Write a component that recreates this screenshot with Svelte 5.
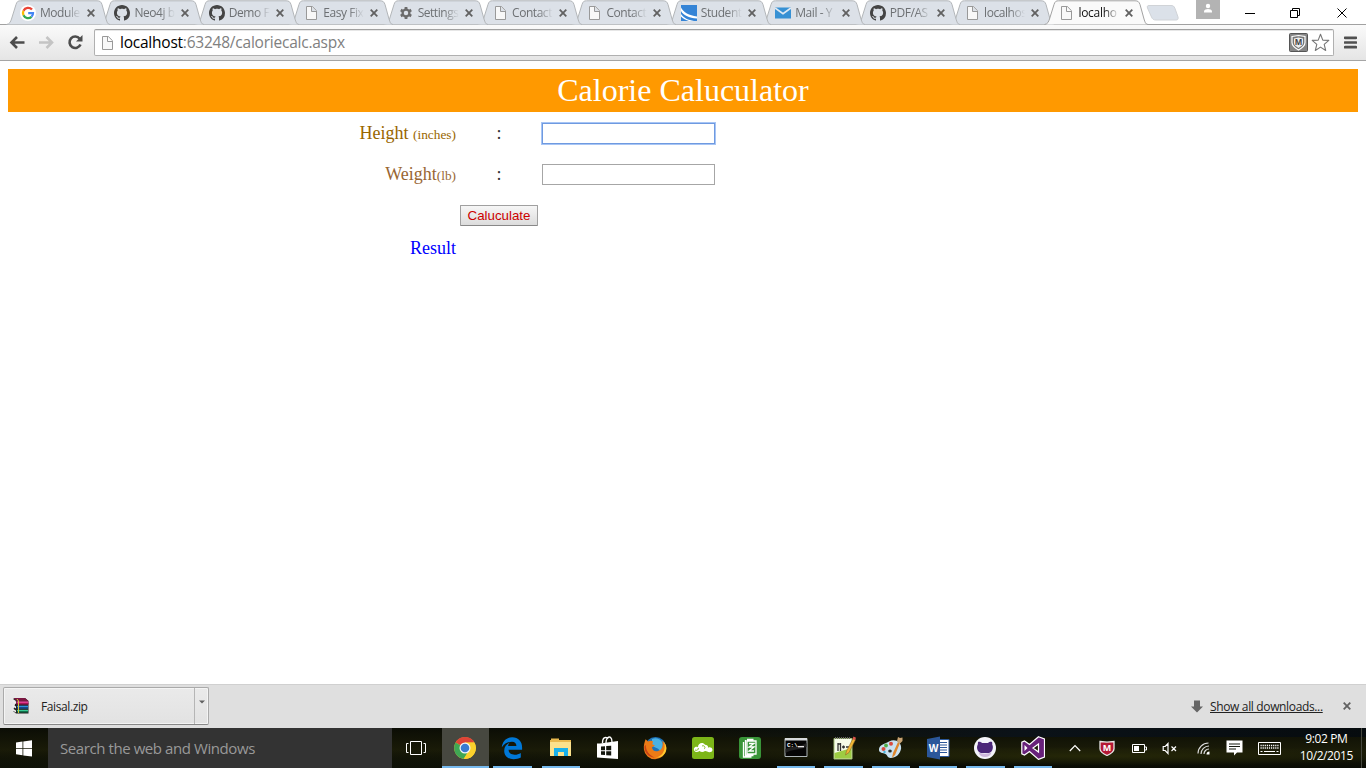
<script>
  const tabs = [
    { icon: 'google', title: 'Module' },
    { icon: 'github', title: 'Neo4j b' },
    { icon: 'github', title: 'Demo F' },
    { icon: 'page', title: 'Easy Fix' },
    { icon: 'gear', title: 'Settings' },
    { icon: 'page', title: 'Contact' },
    { icon: 'page', title: 'Contact' },
    { icon: 'student', title: 'Student' },
    { icon: 'mail', title: 'Mail - Y' },
    { icon: 'github', title: 'PDF/AS' },
    { icon: 'page', title: 'localhos' },
    { icon: 'page', title: 'localho', active: true }
  ];
  const apps = [
    { icon: 'chrome', open: true, current: true },
    { icon: 'edge', open: true },
    { icon: 'explorer', open: true },
    { icon: 'store' },
    { icon: 'firefox' },
    { icon: 'cloud' },
    { icon: 'book' },
    { icon: 'cmd', open: true },
    { icon: 'notepad', open: true },
    { icon: 'paint', open: true },
    { icon: 'word', open: true },
    { icon: 'githubapp', open: true },
    { icon: 'vs', open: true }
  ];
  let height = $state('');
  let weight = $state('');
</script>

{#snippet favicon(name)}
  <svg class="fav" width="16" height="16" viewBox="0 0 16 16">
    {#if name === 'google'}
      <circle cx="8" cy="8" r="8" fill="#fff" />
      <g fill="none" stroke-width="2.3">
        <path d="M12 4.6A5.1 5.1 0 0 0 3.5 5.7" stroke="#ea4335" />
        <path d="M3.5 5.7a5.1 5.1 0 0 0 0 4.6" stroke="#fbbc05" />
        <path d="M3.5 10.3a5.1 5.1 0 0 0 8 1.5" stroke="#34a853" />
        <path d="M11.5 11.8A5 5 0 0 0 13 8.1H8.2" stroke="#4285f4" />
      </g>
    {:else if name === 'github'}
      <path fill="#444" d="M8 0C3.58 0 0 3.58 0 8c0 3.54 2.29 6.53 5.47 7.59.4.07.55-.17.55-.38 0-.19-.01-.82-.01-1.49-2.01.37-2.53-.49-2.69-.94-.09-.23-.48-.94-.82-1.13-.28-.15-.68-.52-.01-.53.63-.01 1.08.58 1.23.82.72 1.21 1.87.87 2.33.66.07-.52.28-.87.51-1.07-1.78-.2-3.64-.89-3.64-3.95 0-.87.31-1.59.82-2.15-.08-.2-.36-1.02.08-2.12 0 0 .67-.21 2.2.82.64-.18 1.32-.27 2-.27s1.36.09 2 .27c1.53-1.04 2.2-.82 2.2-.82.44 1.1.16 1.92.08 2.12.51.56.82 1.27.82 2.15 0 3.07-1.87 3.75-3.65 3.95.29.25.54.73.54 1.48 0 1.07-.01 1.93-.01 2.2 0 .21.15.46.55.38A8.01 8.01 0 0 0 16 8c0-4.42-3.58-8-8-8Z" />
    {:else if name === 'page'}
      <path d="M3.500 1.500h5.800L13.500 5.700v8.800h-10zM8.500 1.500v5h5" fill="#f8f8f8" stroke="#999" />
    {:else if name === 'gear'}
      <g fill="none" stroke="#6b6b6b">
        <circle cx="8" cy="8" r="3.400" stroke-width="2.300" />
        <path stroke-width="2.800" d="M8 4.200V2M8 14v-2.200M4.700 6.100 2.800 5M13.200 11l-1.900-1.100M4.700 9.900 2.800 11M13.200 5l-1.900 1.100" />
      </g>
    {:else if name === 'student'}
      <path fill="#3584d6" d="M0 0h16v16H0z" />
      <path d="M0 2.500C2.500 7.500 8 10.300 16 11.500v2C8 13 2 10 0 6zM0 9c3 4 7 6 13 7H8C5 15 2 13.500 0 11.500z" fill="#fff" />
    {:else if name === 'mail'}
      <path fill="#3791d4" d="M0 2.500h16v11H0z" />
      <path d="m0 3 8 5.800L16 3" fill="none" stroke="#dfe9f2" stroke-width="1.700" />
    {/if}
  </svg>
{/snippet}

{#snippet appicon(name)}
  <svg width="24" height="24" viewBox="0 0 24 24">
    {#if name === 'chrome'}
      <circle cx="12" cy="12" r="10.800" fill="#fbd12c" />
      <path d="M12 12 2.600 6.600A10.800 10.800 0 0 1 21.400 6.600H12z" fill="#de4437" />
      <path d="M12 12 2.600 6.600a10.800 10.800 0 0 0 8.200 16.200l5-8z" fill="#3fa754" />
      <path d="M21.400 6.600a10.800 10.800 0 0 1-10.600 16.200L16.500 14 12 6.800z" fill="#fbd12c" />
      <circle cx="12" cy="12" r="5.500" fill="#f5f5f5" />
      <circle cx="12" cy="12" r="4.300" fill="#3a7bd0" />
    {:else if name === 'edge'}
      <path fill="#0078d7" d="M1.800 11.200C2.500 5 6.500 1.200 12.200 1.200c6.200 0 9.900 4.300 9.900 10.200v2.400H8.600c.1 3.400 2.800 4.900 6 4.900 2.300 0 4.400-.7 6.200-1.800v4.600c-2 1.200-4.600 1.700-7.200 1.700-5.800 0-9.400-3.500-9.400-8.500 0-3.900 2.200-6.700 5.500-8.300-1.100 1.300-1.500 2.300-1.600 3.700h8.300c0-2.800-1.400-4.400-4.400-4.400-4.400 0-7.800 2.200-10.200 5.500z" />
    {:else if name === 'explorer'}
      <path d="M1 4h1V2.500h8V4h12v16H1z" fill="#e9b94f" />
      <path d="M1 6h21v14H1z" fill="#fbe18c" />
      <path d="M5 12h14v8h-4v-4H9v4H5z" fill="#19b0ea" />
    {:else if name === 'store'}
      <path d="M4 7.500 22 5v18L1 21.500V7.500z" fill="#fff" />
      <path d="M6.500 7c0-6 3-6 5-5 2-2 4.500-1 4.500 4M10 7c0-3 .7-5 3-5.600" fill="none" stroke="#fff" stroke-width="1.300" />
      <path d="m5 10.500 4-.3v4H5zM10.200 10.100l5-.4v4.500h-5zM5 15.300h4v3.800l-4-.3zM10.200 15.300h5v4.300l-5-.4z" fill="#14170e" />
    {:else if name === 'firefox'}
      <circle cx="12.500" cy="11.500" r="10.500" fill="#1f73b8" />
      <path d="M9 3c4-2 9 0 10.500 4 1 4-1 7-2.500 8-2-4-6-3-8-6z" fill="#4bb1e3" />
      <path d="M2.600 3.200 5 5.500c2-1 4-1 5 0L9.300 8.200 12 9.600 9 11.200c0 2.500 2.500 4.500 5.300 4 4-.7 6.500-4.500 5-10.500C22.500 7 23.700 10.500 23.200 13a11.200 11.200 0 0 1-22.300.3C.5 9.600 1.500 6 2.600 3.200z" fill="#ed7b16" />
      <path d="M21 5.800c2 7-.5 14.800-8.700 16 7.700.8 13-6.300 10.400-12.600z" fill="#ffca2e" />
      <path d="M2.800 9c0 6 3.700 10.500 9.200 12.500C5 21.500 1 16 1.500 10z" fill="#c74316" />
    {:else if name === 'cloud'}
      <rect x="1" y="1" width="22" height="22" rx="2.500" fill="#7cb518" />
      <path d="M4 15.500c-2.800-2.700.2-6 3-4.200C6.700 6.800 12 5.500 14 8.700c1.800 0 3.300 1 3.200 3 3-1.800 6 2 3.200 4.100-3 1.400-4.400-.8-6.400-.7-2.400 1.700-4 .9-5.600-.1-1.300 1-2.800 1.400-4.400.5z" fill="#fff" />
      <path d="M4 14c2 1 3.800-.4 3.300-2M11 10c2.500-1.200 4 1.800 2 3" fill="none" stroke="#7cb518" stroke-width=".9" />
    {:else if name === 'book'}
      <rect x="1" y="1" width="22" height="22" rx="3" fill="#399438" />
      <g fill="none" stroke="#fff" stroke-width="1.300">
        <path d="M9 5h9v13H9zM7.500 4v15.500h8M5.500 6v15h8M9 3.500h6.500" />
        <path d="M11 7.500h5l-5 3.500h5l-5 4h5" />
      </g>
    {:else if name === 'cmd'}
      <path d="M1 2.500h22v18H1z" fill="#050505" stroke="#aeb6b9" />
      <path d="M1 2h22v2.500H1z" fill="#d7dadc" />
      <path d="M1.500 13C8 10 16 11 22.500 7V11C14 14 8 13 1.500 17z" fill="#222" />
      <text x="3" y="11" fill="#fff" font-family="Liberation Mono, monospace" font-size="6" font-weight="bold">C:\</text>
      <path d="M14 10.700h6" stroke="#fff" stroke-width="1.200" />
    {:else if name === 'notepad'}
      <path d="M2 2.500h18V23H2z" fill="#f6fce9" stroke="#a1bb79" />
      <path d="M2.500 17 19.500 12v10.500h-17z" fill="#9dcc42" />
      <path d="M3 2h16" stroke="#666" stroke-width="2" stroke-dasharray="1 1" />
      <path d="M6 7v8M8.500 7v8M6 8h3M10 11h3M14 11h3M11.500 9.500v3" stroke="#333" stroke-width="1.300" />
      <path d="m13.500 19 1-4L21 2.500l2.500 1.200L17 16.500z" fill="#efb634" stroke="#805a26" stroke-width=".5" />
      <path d="m20.500 3 1-2.500 2.500 1.300-1 2.500z" fill="#d9544d" />
    {:else if name === 'paint'}
      <path d="M10 5.500C17 2 23 7 22 13c-1 5-5 9-10.500 9-3 0-3-3-5-4C3 17-.5 17 0 13c.5-4 5-5 10-7.500z" fill="#c9e2f2" />
      <ellipse cx="11" cy="15" rx="1.800" ry="1.500" fill="#252b28" />
      <circle cx="4.500" cy="13" r="2" fill="#d84c40" />
      <circle cx="7" cy="9.500" r="1.900" fill="#50ad49" />
      <circle cx="12" cy="7.700" r="2" fill="#d84c40" />
      <circle cx="5.500" cy="16" r="1.200" fill="#45b3da" />
      <path d="m13 22 1-5 5-11 2 1-5 12z" fill="#df872d" />
      <path d="m18 5 1-4 2 1 2.500-.5V5l-3 3z" fill="#c9a374" />
    {:else if name === 'word'}
      <path d="M12 3.500h11v17H12z" fill="#fff" stroke="#2b579a" />
      <path d="M14 6.500h7M14 9h7M14 11.500h7M14 14h7M14 16.500h7" stroke="#2b579a" />
      <path d="m1 3 13-2.500v23L1 21z" fill="#2b579a" />
      <text x="2.800" y="16" fill="#fff" font-family="Open Sans, sans-serif" font-size="10" font-weight="bold">W</text>
    {:else if name === 'githubapp'}
      <circle cx="12" cy="12" r="11" fill="#f4f4fa" />
      <path d="M5 6c2-.5 3.500.5 4 1h6c1-.7 2.500-1.500 4-1 .4 1 .3 2 .2 2.500 1.800 3-.2 8-3.200 8.500H8c-3.500-.8-5-5.500-3.200-8.500z" fill="#4b2779" />
      <path d="M5.500 16.500c3 1.500 10 1.500 13 0-1 3-3.500 4.500-6.500 4.500S6.500 19.500 5.500 16.500z" fill="#cdb8dc" />
    {:else if name === 'vs'}
      <path d="M17.500.8 23.500 3v18l-6 2.400L8.500 15.500l-5 3.500L.8 17.800V6.200L3.500 5l5 3.500zM17.500 8 12 12l5.500 4z" fill="#68217a" stroke="#fff" stroke-width="1.200" fill-rule="evenodd" />
      <path d="M3.500 9v6l3-3z" fill="#fff" />
    {/if}
  </svg>
{/snippet}

<div class="screen">
  <header class="tabstrip">
    <div class="tabs">
      {#each tabs as tab, i}
        <div class="tab" class:active={tab.active} style:z-index={tab.active ? 30 : 20 - i}>
          <svg class="shape" width="106" height="25" viewBox="0 0 106 25">
            <path d="M.5 24.500C4 24 4.500 21.500 5.500 19L10 4.500C11 1.500 12 .8 14.500.8H91c3 0 4 1 5 3.700l4 14.500c1 3 1.500 5.300 4 5.500" fill={tab.active ? '#fafafa' : '#dce1e8'} stroke={tab.active ? '#a3a3a3' : '#b3b6b9'} />
          </svg>
          {@render favicon(tab.icon)}
          <span class="title">{tab.title}</span>
          <svg class="close" width="8" height="8" viewBox="0 0 8 8"><path d="m.7.7 6.600 6.600m0-6.600L.7 7.300" /></svg>
        </div>
      {/each}
      <svg class="newtab" width="34" height="18" viewBox="0 0 34 18"><path d="M3 1.500h22c2 0 3 .5 4 3l3 8.500c.5 2-.2 3-2 3H10c-2.500 0-3.500-.8-4.500-3l-4-9c-.6-1.800 0-2.500 1.500-2.500z" fill="#dbe1e9" stroke="#d0d3d7" /></svg>
    </div>
    <div class="controls">
      <svg class="user" width="24" height="19" viewBox="0 0 24 19"><path fill="#b3b3b3" d="M0 0h24v19H0z" /><circle cx="12" cy="6" r="2.200" fill="#fff" /><path d="M8 12.500v-1.300c0-1.500 2.500-2.200 4-2.200s4 .7 4 2.200v1.300z" fill="#fff" /></svg>
      <svg width="11" height="11" viewBox="0 0 11 11"><path d="M0 5.500h10" /></svg>
      <svg class="restore" width="11" height="11" viewBox="0 0 11 11"><path d="M.5 2.500h7v7h-7zM2.500 2.500v-2h7v7h-2" /></svg>
      <svg width="11" height="11" viewBox="0 0 11 11"><path d="m.5.5 9 9m0-9-9 9" /></svg>
    </div>
  </header>

  <nav class="toolbar">
    <svg class="nav-icon" width="16" height="14" viewBox="0 0 16 14"><path d="M15.500 6.500H3M8 1 2.500 6.500 8 12" fill="none" stroke="#4d4d4d" stroke-width="2.600" /></svg>
    <svg class="nav-icon" width="16" height="14" viewBox="0 0 16 14"><path d="M1 6.500h12.500M8.500 1 14 6.500 8.500 12" fill="none" stroke="#c4c4c4" stroke-width="2.600" /></svg>
    <svg class="nav-icon" width="16" height="16" viewBox="0 0 16 16"><path d="M12.700 3.700A5.700 5.700 0 1 0 13.500 9.500" fill="none" stroke="#4d4d4d" stroke-width="2.600" /><path d="M15.500 0v6.500H9z" fill="#4d4d4d" /></svg>
    <div class="omnibox">
      {@render favicon('page')}
      <span class="url"><b>localhost</b>:63248/caloriecalc.aspx</span>
      <svg class="mcafee" width="19" height="19" viewBox="0 0 19 19"><rect x=".5" y=".5" width="18" height="18" rx="1" fill="#858585" stroke="#555" /><path d="M3 3.500 9.500 2.500 16 3.500v6c0 3.500-3 5.500-6.500 7.500C6 15 3 13 3 9.500z" fill="#777" stroke="#fff" stroke-width="1.200" /><path d="m5 5.500 4.500-1 4.500 1V10c0 2-2 3.500-4.500 5C7 13.500 5 12 5 10z" fill="#eee" /><text x="9.500" y="11.500" text-anchor="middle" font-family="Open Sans, sans-serif" font-weight="bold" font-size="8" fill="#444">M</text></svg>
      <svg width="19" height="19" viewBox="0 0 19 19"><path d="m9.500 1.200 2.300 5.900 6 .3-4.600 4 1.500 6.100-5.200-3.400-5.200 3.400 1.500-6.100-4.600-4 6-.3z" fill="#fff" stroke="#777" stroke-width="1.100" stroke-linejoin="round" /></svg>
    </div>
    <svg class="menu" width="13" height="13" viewBox="0 0 13 13"><path d="M1 1.800h11M1 6.500h11M1 11.200h11" stroke="#505050" stroke-width="2.700" stroke-linecap="round" /></svg>
  </nav>

  <main class="page">
    <h1>Calorie Caluculator</h1>
    <div class="form">
      <label class="label height" for="h">Height <small>(inches)</small></label>
      <span class="colon">:</span>
      <input id="h" class="focused" bind:value={height} />
      <label class="label weight" for="w">Weight<small>(lb)</small></label>
      <span class="colon">:</span>
      <input id="w" bind:value={weight} />
      <button class="calc">Caluculate</button>
      <span class="label result">Result</span>
    </div>
  </main>

  <section class="downloads">
    <div class="item">
      <svg width="17" height="17" viewBox="0 0 17 17">
        <path d="m4 4-3-2 2-1h10l3.500 3v12.500H4L1 14z" fill="#222" />
        <path d="M.5 3 4 5v2L.5 5zM.5 7.500 4 9.500v2l-3.500-2zM.5 11.500 4 13.500v2l-3.500-2z" fill="#eee" />
        <path d="M1.500 1H13l3.500 3H5z" fill="#7b1742" /><path d="M4.500 4.300h12V6h-12z" fill="#e43a91" /><path d="M4.500 6h12v1.500h-12z" fill="#a51558" />
        <path d="M5 8.700h11v1.500H5z" fill="#2f91df" /><path d="M5 10.200h11v1.500H5z" fill="#145099" />
        <path d="M5 12.800h11v1.400H5z" fill="#38c893" /><path d="M5 14.200h11v1.200H5z" fill="#0a7e50" />
        <path d="m5 2 1.500 2v12" fill="none" stroke="#d9c63d" />
      </svg>
      <span class="file">Faisal.zip</span>
      <div class="drop"><svg width="6" height="4" viewBox="0 0 6 4"><path d="M0 .5h6l-3 3z" fill="#606060" /></svg></div>
    </div>
    <svg class="down" width="12" height="13" viewBox="0 0 12 13"><path d="M3 .5h6v6h3l-6 6-6-6h3z" fill="#666" /></svg>
    <span class="showall">Show all downloads...</span>
    <svg class="close" width="8" height="8" viewBox="0 0 8 8"><path d="m.7.7 6.600 6.600m0-6.600L.7 7.300" /></svg>
  </section>

  <footer class="taskbar">
    <div class="start"><svg width="16" height="17" viewBox="0 0 16 17"><path d="m0 2.600 6.500-1V8H0zM7.300 1.500 16 .3V8H7.300zM0 8.800h6.500v6.400L0 14.300zM7.300 8.800H16v7.800l-8.700-1.200z" fill="#fff" /></svg></div>
    <div class="search">Search the web and Windows</div>
    <div class="taskview"><svg width="20" height="15" viewBox="0 0 20 15"><path d="M4.500.5h11v13h-11zM2.500 2.500h-2v9h2M17.500 2.500h2v9h-2" fill="none" stroke="#fff" /></svg></div>
    <div class="apps">
      {#each apps as app}
        <div class="app" class:open={app.open} class:current={app.current}>{@render appicon(app.icon)}</div>
      {/each}
    </div>
    <div class="tray">
      <svg width="12" height="8" viewBox="0 0 12 8"><path d="m.8 7 5.200-5.500L11.200 7" fill="none" stroke="#fff" stroke-width="1.200" /></svg>
      <svg width="16" height="16" viewBox="0 0 16 16"><path d="m1 1.500 7 .7 7-.7v7.300c0 3-3 5-7 6.700-4-1.700-7-3.700-7-6.700z" fill="#b51835" stroke="#e6e6e6" stroke-width="1.300" /><text x="8" y="10.500" text-anchor="middle" font-family="Open Sans, sans-serif" font-weight="bold" font-size="9" fill="#fff">M</text></svg>
      <svg width="15" height="9" viewBox="0 0 15 9"><path d="M.5.5h12v8H.500zM13 3h1.500v3H13" fill="none" stroke="#fff" /><path d="M2 2h5v5H2z" fill="#fff" /></svg>
      <svg width="16" height="13" viewBox="0 0 16 13"><path d="M1.200 4.500h2L6 1.500v10l-2.800-3h-2zM9.500 4.500l4.500 4.500m0-4.500L9.500 9" fill="none" stroke="#fff" stroke-width="1.200" /></svg>
      <svg width="13" height="13" viewBox="0 0 13 13"><g fill="none" stroke="#ddd" stroke-width="1.200"><path d="M1 11.500A10.500 10.500 0 0 1 11.500 1M4 12a8 8 0 0 1 8-8M7 12a5 5 0 0 1 5-5" /></g><path d="M9.500 12.500a3 3 0 0 1 3-3v3z" fill="#fff" /></svg>
      <svg width="17" height="16" viewBox="0 0 17 16"><path d="M.5.5h16v12H11L8 15.500v-3H.500z" fill="#fff" /><path d="M3 4h11M3 6.500h11M3 9h7" stroke="#161a11" /></svg>
      <svg width="23" height="13" viewBox="0 0 23 13"><path d="M.5.5h22v12H.5z" fill="none" stroke="#fff" /><path d="M2.500 3.500h18M2.500 6h18" stroke="#fff" stroke-width="1.300" stroke-dasharray="1.200 .9" /><path d="M2.500 9.500h2M6 9.500h11M18.500 9.500h2" stroke="#fff" /></svg>
    </div>
    <div class="clock"><span>9:02 PM</span><span>10/2/2015</span></div>
    <div class="peek"></div>
  </footer>
</div>

<style>
  :global(body) { margin: 0; overflow: hidden; }
  * { box-sizing: border-box; }
  svg { display: block; flex: none; }
  .screen { width: 1366px; height: 768px; display: flex; flex-direction: column; background: #fff; font-family: 'Open Sans', 'Noto Sans', sans-serif; }
  .tabstrip { height: 25px; flex: none; display: flex; border-bottom: 1px solid #a1a1a1; }
  .tabs { display: flex; padding-left: 6px; width: 1190px; flex: none; }
  .tab { position: relative; width: 94.42px; height: 25px; flex: none; display: flex; align-items: center; padding: 1px 0 0 14px; }
  .shape { position: absolute; left: 0; top: 0; }
  .tab .fav { position: relative; }
  .title { position: relative; width: 42px; margin-left: 4px; font-size: 12px; letter-spacing: -.45px; line-height: 16px; color: #6d7073; white-space: nowrap; mask-image: linear-gradient(90deg, #000 62%, transparent 98%); }
  .active .title { color: #111; letter-spacing: -.3px; }
  .close { position: relative; fill: none; stroke: #616161; stroke-width: 1.8; }
  .tab .close { margin-left: 5px; }
  .newtab { margin: 4px 0 0 7px; }
  .controls { flex: 1; display: flex; align-items: flex-start; padding: 8px 0 0 6px; }
  .controls svg { fill: none; stroke: #000; margin-right: 34px; }
  .controls .restore { margin-right: 36px; }
  .controls .user { stroke: none; margin: -8px 25px 0 0; }
  .toolbar { height: 36px; flex: none; display: flex; align-items: center; padding: 0 8px 0 9px; background: linear-gradient(#fafafa, #e5e5e5); border-bottom: 1px solid #a5a5a5; }
  .nav-icon { margin-right: 13px; }
  .nav-icon:nth-child(3) { margin-right: 11px; }
  .omnibox { width: 1240px; height: 27px; display: flex; align-items: center; padding: 0 3px 0 4px; background: #fff; border: 1px solid #b0b0b0; border-top-color: #a0a0a0; border-radius: 2px; box-shadow: inset 0 1px #e6e6e6; }
  .url { flex: 1; margin: -2px 0 0 5px; font-size: 15.500px; color: #808080; letter-spacing: -.23px; }
  .url b { font-weight: 400; color: #000; }
  .mcafee { margin-right: 3px; }
  .menu { margin-left: 10px; }
  .page { flex: 1; padding: 8px; font-family: 'Liberation Serif', serif; }
  h1 { margin: 0; height: 43px; background: #f90; color: #fff; font-size: 32px; font-weight: 400; line-height: 43px; text-align: center; }
  .form { display: grid; grid-template-columns: 448px 86px 174px; grid-template-rows: 43px 39px 43px 23px; align-items: center; }
  .label { font-size: 18px; text-align: right; white-space: nowrap; }
  .label small { font-size: 13.333px; }
  .height { color: #960; }
  .weight { color: #963; }
  .result { color: #00f; grid-column: 1; }
  .colon { text-align: center; font-size: 18px; color: #333; }
  input { width: 173px; height: 21px; margin: 0; padding: 1px; border: 1px solid #a6a6a6; outline: none; background: #fff; }
  input.focused { border-color: #6f9ae0; box-shadow: 0 0 0 1px #a7c5f5; }
  .calc { grid-column: 2; justify-self: center; width: 78px; height: 21px; padding: 0; border: 1px solid #a0a0a0; border-bottom-color: #888; border-radius: 1px; background: linear-gradient(#f6f6f6, #dcdcdc); color: #c00; font: 13.333px 'Liberation Sans', Arial, sans-serif; }
  .downloads { height: 44px; flex: none; display: flex; align-items: center; padding-left: 3px; background: #dfdfdf; border-top: 1px solid #d0d0d0; }
  .item { width: 206px; height: 38px; margin-top: -1px; display: flex; align-items: center; padding-left: 8px; margin-right: 982px; background: linear-gradient(#eaeaea, #e2e2e2); border: 1px solid #aaa; border-bottom-color: #888; border-radius: 2px; box-shadow: inset 0 0 0 1px #f4f4f4; }
  .item > svg { margin-top: -2px; }
  .file { flex: 1; margin-left: 12px; font-size: 12px; color: #222; letter-spacing: -.4px; }
  .drop { width: 14px; height: 36px; border-left: 1px solid #b5b5b5; padding: 12px 0 0 4px; }
  .showall { margin-left: 7px; width: 113px; font-size: 12px; letter-spacing: -.35px; color: #222; text-decoration: underline; white-space: nowrap; }
  .downloads .close { margin: -1px 0 0 20px; }
  .taskbar { height: 40px; flex: none; display: flex; background: radial-gradient(ellipse at 15% 100%, #111408 0, transparent 35%), linear-gradient(90deg, transparent 50%, #0b1218 75%, #060b0e) top / 100% 9px no-repeat, radial-gradient(ellipse at 80% 70%, #252708, transparent 24%), linear-gradient(#0b0d05, #1a1b08 55%, #090b04); }
  .taskbar > * { flex: none; }
  .start { width: 48px; display: flex; align-items: center; justify-content: center; }
  .search { width: 344px; padding-left: 12px; background: #333; color: #999; font-size: 15px; letter-spacing: -.42px; line-height: 40px; }
  .taskview { width: 49.500px; padding-left: 14px; display: flex; align-items: center; }
  .apps { display: flex; }
  .app { width: 47.300px; display: flex; align-items: center; justify-content: center; position: relative; }
  .app:nth-child(n + 3):nth-child(-n + 7) { left: 1px; }
  .app.open::after { content: ''; position: absolute; left: 4.500px; right: 4.500px; bottom: 0; height: 2px; background: #76b9ed; }
  .app.current { background: #474840; }
  .app.current::after { left: 0; right: 0; }
  .tray { display: flex; align-items: center; width: 218px; padding-left: 13px; }
  .tray svg:nth-child(2) { margin-left: 18px; }
  .tray svg:nth-child(3) { margin-left: 17px; }
  .tray svg:nth-child(4) { margin-left: 15px; }
  .tray svg:nth-child(5) { margin-left: 19px; }
  .tray svg:nth-child(6) { margin-left: 16px; }
  .tray svg:nth-child(7) { margin-left: 15px; }
  .clock { width: 79px; margin-left: 12.500px; display: flex; flex-direction: column; align-items: center; padding-top: 2px; color: #fff; font-size: 12px; letter-spacing: -.4px; line-height: 17px; }
  .peek { width: 1px; background: #45473e; margin-left: -5px; }
</style>
